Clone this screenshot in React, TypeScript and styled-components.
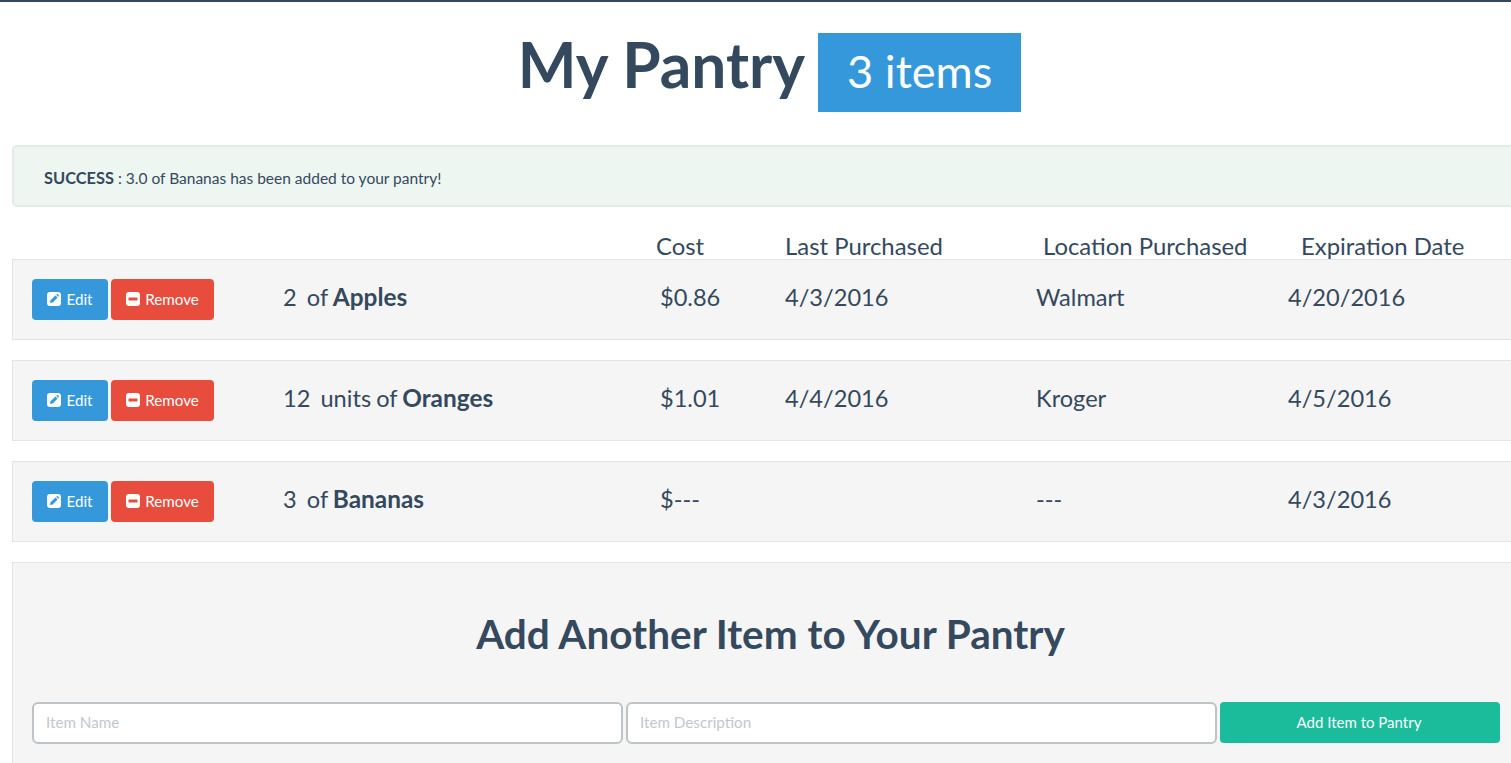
import styled, { createGlobalStyle } from 'styled-components';

const GlobalStyle = createGlobalStyle`
  html, body {
    margin: 0;
    padding: 0;
    width: 1511px;
    height: 763px;
    overflow: hidden;
    background: #ffffff;
  }
  * {
    box-sizing: border-box;
  }
`;

const Page = styled.div`
  width: 1541px;
  height: 763px;
  padding: 0 12px;
  border-top: 2px solid #34495e;
  color: #34495e;
  font-family: Lato, sans-serif;
  font-size: 15px;
`;

const Content = styled.div`
  width: 1517px;
`;

const Header = styled.h1`
  display: flex;
  justify-content: center;
  align-items: center;
  gap: 13px;
  height: 143px;
  margin: 0;
  padding: 0 2px 19px 0;
  font-size: 62.2px;
  line-height: 74px;
  font-weight: 700;
`;

const CountBadge = styled.span`
  display: inline-flex;
  align-items: center;
  height: 79px;
  margin-top: 16px;
  padding: 0 29px 3px;
  background: #3498db;
  color: #ffffff;
  font-size: 45.2px;
  font-weight: 400;
`;

const Alert = styled.div`
  height: 62px;
  padding: 21px 30px 0;
  background: #eef6f2;
  border: 2px solid #e1ebe7;
  border-radius: 5px;
  font-size: 15.5px;
  line-height: 20px;

  strong {
    font-size: 16.4px;
  }
`;

const ColumnGrid = styled.div`
  display: grid;
  grid-template-columns: 251px 377px 125px 251px 252px 252px;
`;

const Headings = styled(ColumnGrid)`
  height: 52px;
  padding: 26px 0 0 20px;
  font-size: 23.9px;
  line-height: 26px;
`;

const Heading = styled.div<{ $offset?: number }>`
  margin-left: ${(p) => p.$offset ?? 0}px;
  white-space: nowrap;
`;

const Well = styled.div`
  background: #f5f5f5;
  border: 1px solid #e3e3e3;
`;

const ItemRow = styled(Well)`
  height: 81px;
  margin-bottom: 20px;
  padding: 19px;
`;

const Cells = styled(ColumnGrid)`
  height: 41px;
  align-items: start;
  font-size: 23.6px;
  line-height: 36px;
`;

const Actions = styled.div`
  display: flex;
  gap: 3px;
`;

const ActionButton = styled.button<{ $color: string; $width: number }>`
  display: inline-flex;
  align-items: center;
  justify-content: center;
  gap: 5px;
  width: ${(p) => p.$width}px;
  height: 41px;
  padding: 0 0 1px;
  border: none;
  border-radius: 4px;
  background: ${(p) => p.$color};
  color: #ffffff;
  font-family: inherit;
  font-size: 15.2px;
`;

const ButtonIcon = styled.svg`
  width: 14px;
  height: 14px;
  flex: none;
`;

const Cell = styled.div`
  white-space: nowrap;
`;

const ItemLabel = styled(Cell)`
  word-spacing: -1px;

  strong {
    font-size: 24.4px;
  }
`;

const AddPanel = styled(Well)`
  height: 240px;
  padding: 0 19px;
`;

const AddTitle = styled.h2`
  height: 139px;
  margin: 0;
  padding-top: 42px;
  text-align: center;
  font-size: 40.5px;
  line-height: 58px;
  font-weight: 700;
`;

const AddForm = styled.div`
  display: grid;
  grid-template-columns: 591px 591px 280px;
  gap: 3px;
`;

const TextField = styled.input`
  height: 42px;
  padding: 0 12px 2px;
  border: 2px solid #bdc3c7;
  border-radius: 6px;
  background: #ffffff;
  color: #34495e;
  font-family: inherit;
  font-size: 15.2px;
  &::placeholder {
    color: #bfc8d0;
    opacity: 1;
  }
`;

const SubmitButton = styled.button`
  height: 41px;
  padding: 0 2px 2px 0;
  border: none;
  border-radius: 4px;
  background: #1abc9c;
  color: #ffffff;
  font-family: inherit;
  font-size: 15px;
`;

const PencilIcon = () => (
  <ButtonIcon viewBox="0 0 14 14">
    <rect width="14" height="14" rx="3" fill="#ffffff" />
    <path d="M3 11l.6-2.7 4.9-4.9 2.1 2.1-4.9 4.9z" fill="#3498db" />
    <path d="M9.2 2.8l.6-.6a.7.7 0 0 1 1 0l1 1a.7.7 0 0 1 0 1l-.6.6z" fill="#3498db" />
  </ButtonIcon>
);

const MinusIcon = () => (
  <ButtonIcon viewBox="0 0 14 14">
    <rect width="14" height="14" rx="3" fill="#ffffff" />
    <rect x="2.5" y="5.5" width="9" height="3" rx="0.5" fill="#e74c3c" />
  </ButtonIcon>
);

const items = [
  { qty: '2', unit: 'of', name: 'Apples', cost: '$0.86', last: '4/3/2016', where: 'Walmart', exp: '4/20/2016' },
  { qty: '12', unit: 'units of', name: 'Oranges', cost: '$1.01', last: '4/4/2016', where: 'Kroger', exp: '4/5/2016' },
  { qty: '3', unit: 'of', name: 'Bananas', cost: '$---', last: '', where: '---', exp: '4/3/2016' },
];

const App = () => (
  <Page>
    <GlobalStyle />
    <Content>
      <Header>
        My Pantry
        <CountBadge>3 items</CountBadge>
      </Header>
      <Alert>
        <strong>SUCCESS</strong> : 3.0 of Bananas has been added to your pantry!
      </Alert>
      <Headings>
        <Heading />
        <Heading />
        <Heading $offset={-4}>Cost</Heading>
        <Heading>Last Purchased</Heading>
        <Heading $offset={7}>Location Purchased</Heading>
        <Heading $offset={13}>Expiration Date</Heading>
      </Headings>
      {items.map((item) => (
        <ItemRow key={item.name}>
          <Cells>
            <Actions>
              <ActionButton $color="#3498db" $width={76}>
                <PencilIcon />
                Edit
              </ActionButton>
              <ActionButton $color="#e74c3c" $width={103}>
                <MinusIcon />
                Remove
              </ActionButton>
            </Actions>
            <ItemLabel>
              {item.qty}&nbsp; {item.unit} <strong>{item.name}</strong>
            </ItemLabel>
            <Cell>{item.cost}</Cell>
            <Cell>{item.last}</Cell>
            <Cell>{item.where}</Cell>
            <Cell>{item.exp}</Cell>
          </Cells>
        </ItemRow>
      ))}
      <AddPanel>
        <AddTitle>Add Another Item to Your Pantry</AddTitle>
        <AddForm>
          <TextField placeholder="Item Name" />
          <TextField placeholder="Item Description" />
          <SubmitButton>Add Item to Pantry</SubmitButton>
        </AddForm>
      </AddPanel>
    </Content>
  </Page>
);

export default App;
